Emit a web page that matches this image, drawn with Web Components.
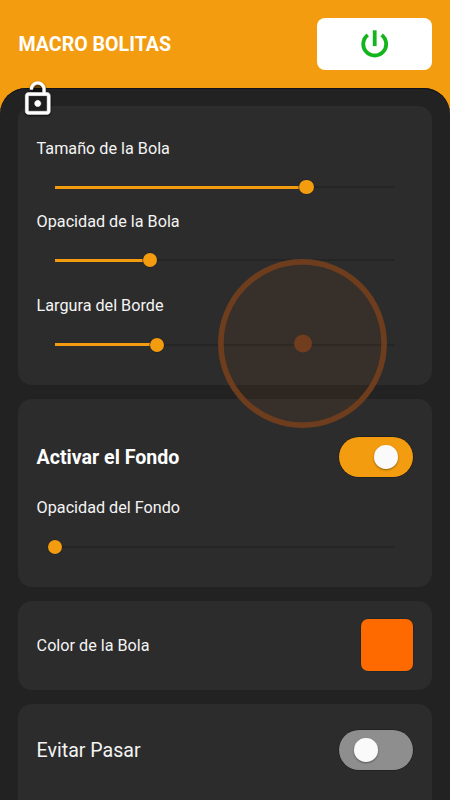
<!DOCTYPE html>
<html lang="es">
<head>
<meta charset="UTF-8">
<meta name="viewport" content="width=device-width, initial-scale=1">
<title>Macro Bolitas</title>
<style>
  html, body { margin: 0; height: 100%; }
  body {
    font-family: Roboto, "Liberation Sans", sans-serif;
    color: #fff;
    background: #f39c0f;
    overflow: hidden;
  }
</style>
</head>
<body>
<macro-app></macro-app>

<script>
/* a-power-button — Atom: power button */
class APowerButton extends HTMLElement {
  constructor() {
    super();
    this.attachShadow({ mode: 'open' });
  }

  connectedCallback() {
    this.shadowRoot.innerHTML = `
      <style>
        :host {
          display: flex;
          align-items: center;
          justify-content: center;
          width: 115px;
          height: 51.5px;
          border-radius: 8px;
          background: #fff;
        }
        svg { width: 28px; height: 28px; }
      </style>
      <svg viewBox="0 0 28 28" fill="none" stroke="#12b51b" stroke-width="3.8">
        <path d="M13.7 .3v15.8"/>
        <path d="M20.6 4.9a11.45 11.45 0 1 1-13.8 0"/>
      </svg>
    `;
  }
}
customElements.define('a-power-button', APowerButton);

/* a-lock — Atom: open padlock */
class ALock extends HTMLElement {
  constructor() {
    super();
    this.attachShadow({ mode: 'open' });
  }

  connectedCallback() {
    this.shadowRoot.innerHTML = `
      <style>
        :host { display: block; width: 37.5px; height: 37.5px; }
        svg { display: block; width: 100%; height: 100%; overflow: visible; filter: drop-shadow(0 1.5px 1px rgba(0,0,0,.75)); }
      </style>
      <svg viewBox="0 0 24 24">
        <path fill="#000" fill-opacity=".35" d="M8.5 6a3.5 3.5 0 0 1 7 0v3h-7z"/>
        <path fill="#1d1d1d" d="M5 9h14v12H5z"/>
        <path fill="#fff" stroke="#fff" stroke-width=".3" d="M12 17c1.1 0 2-.9 2-2s-.9-2-2-2-2 .9-2 2 .9 2 2 2zm6-9h-1V6c0-2.76-2.24-5-5-5S7 3.24 7 6h1.9c0-1.71 1.39-3.1 3.1-3.1 1.71 0 3.1 1.39 3.1 3.1v2H6c-1.1 0-2 .9-2 2v10c0 1.1.9 2 2 2h12c1.1 0 2-.9 2-2V10c0-1.1-.9-2-2-2zm0 12H6V10h12v10z"/>
      </svg>
    `;
  }
}
customElements.define('a-lock', ALock);

/* a-switch — Atom: on/off switch */
class ASwitch extends HTMLElement {
  constructor() {
    super();
    this.attachShadow({ mode: 'open' });
  }

  connectedCallback() {
    this.shadowRoot.innerHTML = `
      <style>
        :host {
          display: flex;
          align-items: center;
          box-sizing: border-box;
          width: 74.6px;
          height: 40px;
          padding: 0 15.5px;
          border-radius: 21px;
          background: #8e8e8e;
          box-shadow: 0 0 0 .6px #191919;
        }
        :host([on]) { background: #f39c0f; justify-content: flex-end; }
        .knob {
          width: 23.5px;
          height: 23.5px;
          border-radius: 50%;
          background: #fafafa;
          box-shadow: 0 1px 2px rgba(0,0,0,.4);
        }
      </style>
      <div class="knob"></div>
    `;
  }
}
customElements.define('a-switch', ASwitch);

/* m-slider — Molecule: label + slider, value is a percentage */
class MSlider extends HTMLElement {
  constructor() {
    super();
    this.attachShadow({ mode: 'open' });
  }

  connectedCallback() {
    const value = Number(this.getAttribute('value')) || 0;
    this.shadowRoot.innerHTML = `
      <style>
        :host { display: block; }
        .label { font-size: 16.2px; line-height: 20px; color: #f4f4f4; }
        .track {
          display: flex;
          align-items: center;
          height: 14px;
          margin: 21.4px 18.5px 0 18.2px;
        }
        .fill { width: ${value}%; height: 3px; background: #f39c0f; }
        .thumb {
          flex: none;
          width: 14.2px;
          height: 14.2px;
          margin: 0 -7.1px;
          border-radius: 50%;
          background: #f39c0f;
          box-shadow: 0 0 0 .5px #191f2a;
          z-index: 1;
        }
        .rest { flex: 1; height: 2.4px; background: #252525; }
      </style>
      <div class="label"><slot></slot></div>
      <div class="track">
        <div class="fill"></div>
        <div class="thumb"></div>
        <div class="rest"></div>
      </div>
    `;
  }
}
customElements.define('m-slider', MSlider);

/* m-card — Molecule: rounded settings card */
class MCard extends HTMLElement {
  constructor() {
    super();
    this.attachShadow({ mode: 'open' });
  }

  connectedCallback() {
    this.shadowRoot.innerHTML = `
      <style>
        :host {
          display: flex;
          flex-direction: column;
          flex: none;
          box-sizing: border-box;
          padding: 0 18.3px;
          border-radius: 14px;
          background: #2c2c2c;
        }
      </style>
      <slot></slot>
    `;
  }
}
customElements.define('m-card', MCard);

/* m-row — Molecule: text on the left, control on the right */
class MRow extends HTMLElement {
  constructor() {
    super();
    this.attachShadow({ mode: 'open' });
  }

  connectedCallback() {
    this.shadowRoot.innerHTML = `
      <style>
        :host {
          display: flex;
          align-items: center;
          justify-content: space-between;
          font-size: 16.2px;
          line-height: 24px;
          color: #f4f4f4;
        }
        :host([size="large"]) { font-size: 19.6px; }
        :host([strong]) { font-weight: 700; color: #fff; }
        .text { padding-top: 1.6px; }
      </style>
      <div class="text"><slot></slot></div>
      <slot name="control"></slot>
    `;
  }
}
customElements.define('m-row', MRow);

/* a-ball — Atom: floating ball preview */
class ABall extends HTMLElement {
  constructor() {
    super();
    this.attachShadow({ mode: 'open' });
  }

  connectedCallback() {
    this.shadowRoot.innerHTML = `
      <style>
        :host { display: block; width: 169px; height: 169px; pointer-events: none; }
        svg { display: block; }
      </style>
      <svg width="169" height="169" viewBox="0 0 169 169">
        <circle cx="84.5" cy="84.5" r="78.8" fill="#ff6a00" fill-opacity=".055"/>
        <circle cx="84.5" cy="84.5" r="81.6" fill="none" stroke="#6e3d1e" stroke-opacity=".98" stroke-width="5.7"/>
        <circle cx="85" cy="84.5" r="9" fill="#703e1f"/>
      </svg>
    `;
  }
}
customElements.define('a-ball', ABall);

/* macro-app — Page */
class MacroApp extends HTMLElement {
  constructor() {
    super();
    this.attachShadow({ mode: 'open' });
  }

  connectedCallback() {
    this.shadowRoot.innerHTML = `
      <style>
        :host {
          display: flex;
          flex-direction: column;
          position: relative;
          height: 100vh;
          overflow: hidden;
        }
        header {
          display: flex;
          flex: none;
          align-items: center;
          justify-content: space-between;
          box-sizing: border-box;
          height: 88px;
          padding: 0 18px .5px 18.5px;
        }
        h1 { margin: 0; padding-top: 2.6px; font-size: 19.6px; line-height: 24px; font-weight: 700; }
        main {
          display: flex;
          flex: 1;
          min-height: 0;
          flex-direction: column;
          gap: 14.3px;
          box-sizing: border-box;
          padding: 18.3px 18.3px 0;
          border-radius: 26px 26px 0 0;
          background: #222;
          box-shadow: inset 0 1px 0 #10131c;
        }
        .ball-card { height: 278.5px; padding-top: 32.5px; }
        .ball-card m-slider + m-slider { margin-top: 17.6px; }
        .ball-card m-slider.border { margin-top: 29.2px; }
        .back-card { height: 188px; padding-top: 37.8px; }
        .back-card m-slider { margin-top: 21.6px; }
        .color-card { height: 88.4px; padding-bottom: .6px; justify-content: center; }
        .skip-card { height: 120px; padding-top: 25.8px; }
        .swatch {
          width: 52px;
          height: 52px;
          border-radius: 7px;
          background: #ff6a00;
          box-shadow: 0 0 0 .6px #12282c;
        }
        a-lock { position: absolute; left: 18.6px; top: 79.6px; }
        a-ball { position: absolute; left: 218.2px; top: 258.8px; }
      </style>

      <header>
        <h1>MACRO BOLITAS</h1>
        <a-power-button></a-power-button>
      </header>

      <main>
        <m-card class="ball-card">
          <m-slider value="74">Tamaño de la Bola</m-slider>
          <m-slider value="28">Opacidad de la Bola</m-slider>
          <m-slider value="30" class="border">Largura del Borde</m-slider>
        </m-card>

        <m-card class="back-card">
          <m-row size="large" strong>Activar el Fondo<a-switch slot="control" on></a-switch></m-row>
          <m-slider value="0">Opacidad del Fondo</m-slider>
        </m-card>

        <m-card class="color-card">
          <m-row>Color de la Bola<div class="swatch" slot="control"></div></m-row>
        </m-card>

        <m-card class="skip-card">
          <m-row size="large">Evitar Pasar<a-switch slot="control"></a-switch></m-row>
        </m-card>
      </main>

      <a-lock></a-lock>
      <a-ball></a-ball>
    `;
  }
}
customElements.define('macro-app', MacroApp);
</script>
</body>
</html>
